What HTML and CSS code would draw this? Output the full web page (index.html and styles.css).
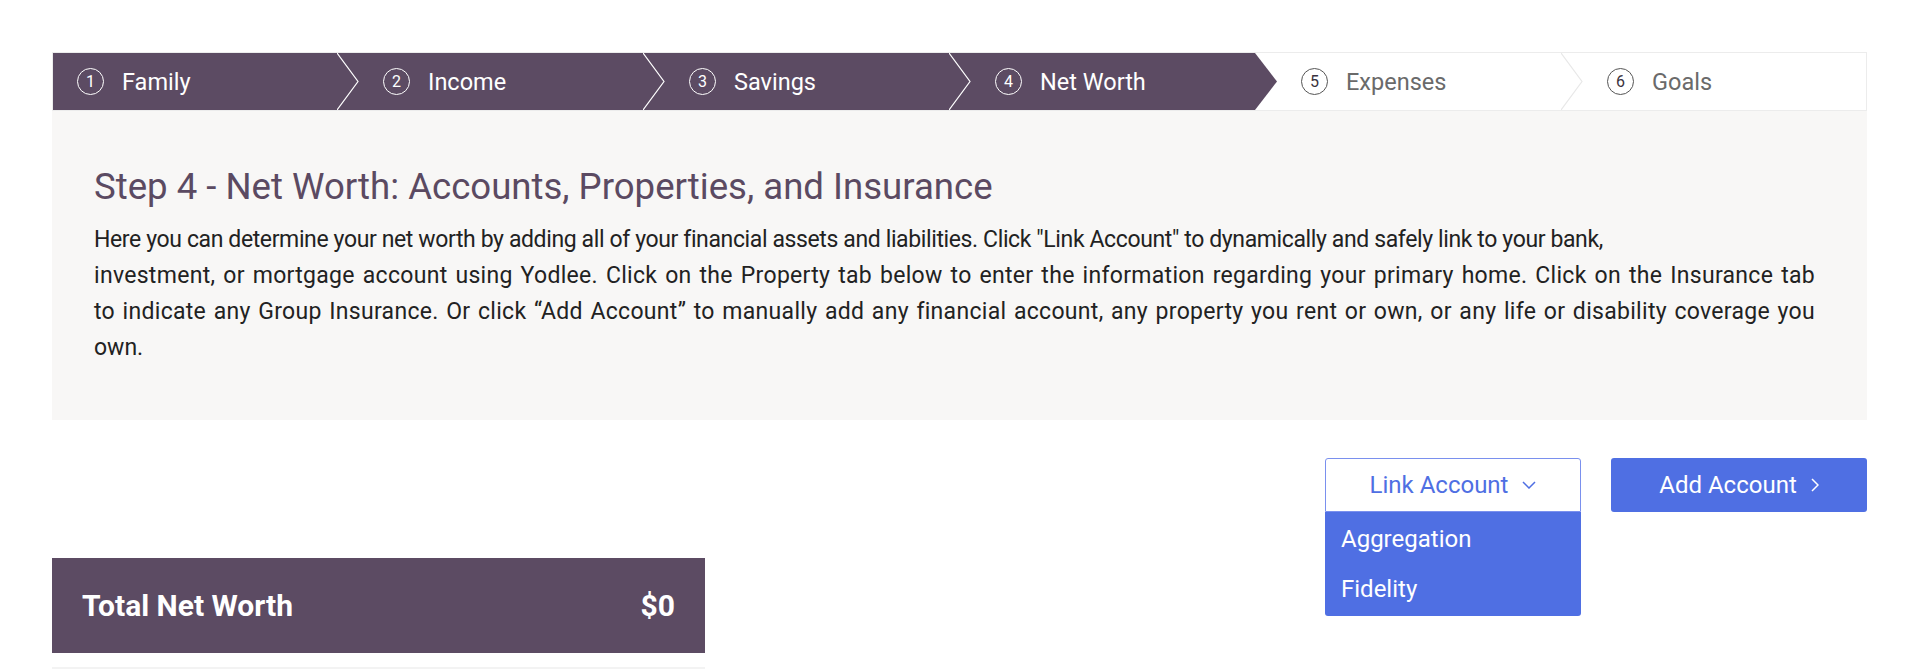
FILE: index.html
```html
<!DOCTYPE html>
<html lang="en">
  <head>
    <meta charset="UTF-8" />
    <meta name="viewport" content="width=device-width, initial-scale=1.0" />
    <title>Net Worth</title>
    <link rel="stylesheet" href="styles.css">
  </head>
  <body>
    <div class="page">
      <ol class="steps">
        <li class="step done">
          <span class="num">1</span><span class="label">Family</span>
          <svg class="sep" viewBox="0 0 22 58" preserveAspectRatio="none"><polyline points="0,0 21,29 0,58" /></svg>
        </li>
        <li class="step done">
          <span class="num">2</span><span class="label">Income</span>
          <svg class="sep" viewBox="0 0 22 58" preserveAspectRatio="none"><polyline points="0,0 21,29 0,58" /></svg>
        </li>
        <li class="step done">
          <span class="num">3</span><span class="label">Savings</span>
          <svg class="sep" viewBox="0 0 22 58" preserveAspectRatio="none"><polyline points="0,0 21,29 0,58" /></svg>
        </li>
        <li class="step current">
          <span class="num">4</span><span class="label">Net Worth</span>
        </li>
        <li class="step">
          <span class="num">5</span><span class="label">Expenses</span>
          <svg class="sep light" viewBox="0 0 22 58" preserveAspectRatio="none"><polyline points="0,0 21,29 0,58" /></svg>
        </li>
        <li class="step last">
          <span class="num">6</span><span class="label">Goals</span>
        </li>
      </ol>

      <section class="intro">
        <h1>Step 4 - Net Worth: Accounts, Properties, and Insurance</h1>
        <p>
          <span class="line first">Here you can determine your net worth by adding all of your financial assets and liabilities. Click "Link Account" to dynamically and safely link to your bank,</span>
          <span class="line full">investment, or mortgage account using Yodlee. Click on the Property tab below to enter the information regarding your primary home. Click on the Insurance tab</span>
          <span class="line full">to indicate any Group Insurance. Or click “Add Account” to manually add any financial account, any property you rent or own, or any life or disability coverage you</span>
          <span class="line">own.</span>
        </p>
      </section>

      <div class="actions">
        <div class="link-wrap">
          <button class="btn btn-outline" type="button">
            Link Account
            <svg class="chev-down" viewBox="0 0 14 8"><polyline points="1,1 7,7 13,1" /></svg>
          </button>
          <ul class="menu">
            <li>Aggregation</li>
            <li>Fidelity</li>
          </ul>
        </div>
        <button class="btn btn-solid" type="button">
          Add Account
          <svg class="chev-right" viewBox="0 0 8 14"><polyline points="1,1 7,7 1,13" /></svg>
        </button>
      </div>

      <div class="total">
        <span>Total Net Worth</span>
        <span>$0</span>
      </div>
      <div class="total-list"></div>
    </div>
  </body>
</html>
```

FILE: styles.css
```css
body {
  margin: 0;
  font-family: Roboto, "Liberation Sans", sans-serif;
  color: #222;
  background: #fff;
}
.page {
  padding: 52px 53px 0 52px;
}

/* steps bar */
.steps {
  display: flex;
  margin: 0;
  padding: 0;
  list-style: none;
  border: 1px solid #ececec;
  background: #fff;
}
.step {
  flex: 0 0 306px;
  height: 57px;
  display: flex;
  align-items: center;
  padding-left: 24px;
  box-sizing: border-box;
  color: #6a6a6a;
  font-size: 23.5px;
}
.step.last {
  flex: 1;
}
.step.done,
.step.current {
  background: #5c4b63;
  color: #fff;
}
.step.current {
  clip-path: polygon(0 0, calc(100% - 22px) 0, 100% 50%, calc(100% - 22px) 100%, 0 100%);
}
.num {
  width: 25px;
  height: 25px;
  border: 1px solid currentColor;
  border-radius: 50%;
  display: flex;
  align-items: center;
  justify-content: center;
  font-size: 16px;
  flex: none;
}
.step:not(.done):not(.current) .num {
  color: #3a3340;
  border-color: #555;
}
.label {
  margin-left: 18px;
}
.sep {
  margin-left: auto;
  width: 22px;
  height: 100%;
  flex: none;
}
.sep polyline {
  fill: none;
  stroke: #fff;
  stroke-width: 1.2;
}
.sep.light polyline {
  stroke: #e8e8e8;
}

/* intro panel */
.intro {
  background: #f8f7f6;
  padding: 56px 52px 54px 42px;
}
.intro h1 {
  margin: 0 0 15px 0;
  font-size: 36.6px;
  line-height: 40px;
  font-weight: 400;
  color: #5b4a62;
}
.intro p {
  margin: 0;
  font-size: 23px;
  line-height: 36px;
  color: #222;
}
.intro .line {
  display: block;
  white-space: nowrap;
}
.intro .line.first {
  letter-spacing: -0.38px;
}
.intro .line.full {
  letter-spacing: 0.3px;
  text-align: justify;
  text-align-last: justify;
}

/* buttons */
.actions {
  display: flex;
  justify-content: flex-end;
  gap: 30px;
  margin-top: 38px;
}
.link-wrap {
  position: relative;
}
.btn {
  width: 256px;
  height: 54px;
  border-radius: 3px;
  font-family: inherit;
  font-size: 24px;
  display: flex;
  align-items: center;
  justify-content: center;
  gap: 14px;
  cursor: pointer;
}
.btn-outline {
  background: #fff;
  color: #4f6fe3;
  border: 1px solid #7a90ee;
  border-radius: 3px 3px 0 0;
}
.btn-solid {
  background: #4f6fe3;
  color: #fff;
  border: none;
}
.chev-down {
  width: 14px;
  height: 8px;
}
.chev-right {
  width: 8px;
  height: 14px;
}
.btn svg polyline {
  fill: none;
  stroke: currentColor;
  stroke-width: 1.5;
}
.menu {
  position: absolute;
  top: 100%;
  left: 0;
  right: 0;
  margin: 0;
  padding: 2px 0;
  list-style: none;
  background: #4f6fe3;
  border-radius: 0 0 3px 3px;
  color: #fff;
  font-size: 24px;
}
.menu li {
  height: 50px;
  line-height: 50px;
  padding-left: 16px;
}

/* total */
.total {
  margin-top: 46px;
  width: 653px;
  height: 95px;
  box-sizing: border-box;
  padding: 0 30px;
  background: #5c4b63;
  color: #fff;
  display: flex;
  align-items: center;
  justify-content: space-between;
  font-size: 30px;
  font-weight: 700;
}
.total-list {
  margin-top: 14px;
  width: 653px;
  height: 2px;
  background: #f3f3f3;
}
```
